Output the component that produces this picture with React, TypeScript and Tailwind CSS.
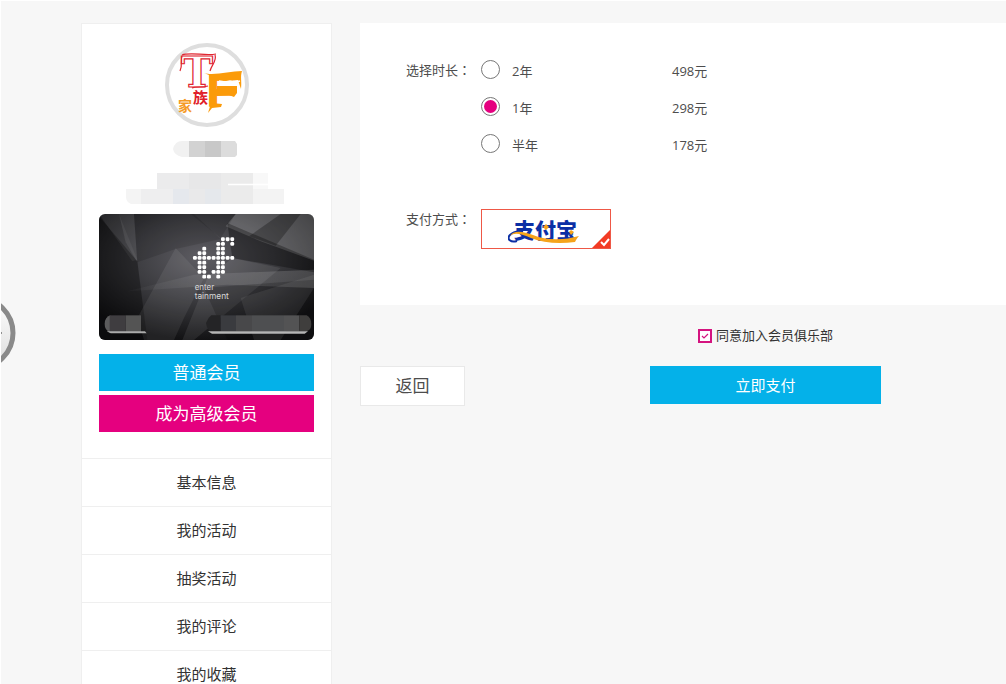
import React, { useState } from 'react';

const durations = [
  { id: 'y2', label: '2年', price: '498元' },
  { id: 'y1', label: '1年', price: '298元' },
  { id: 'half', label: '半年', price: '178元' },
];

const menu = ['基本信息', '我的活动', '抽奖活动', '我的评论', '我的收藏'];

// rows of the dotted "tf" mark, each entry is a list of filled columns
const dots = [
  [6, 7, 8],
  [5, 6, 8],
  [2, 5, 6],
  [1, 2, 5, 6],
  [0, 1, 2, 3, 4, 5, 6, 7, 8],
  [1, 2, 5, 6],
  [1, 2, 5, 6],
  [1, 2, 4, 5, 6],
  [2, 3, 5],
];

const Avatar: React.FC = () => (
  <svg viewBox="0 0 84 84" className="w-[84px] h-[84px]" role="img" aria-label="TF家族">
    <circle cx="42" cy="42" r="40" fill="#fff" stroke="#dedede" strokeWidth="4" />
    <text x="16" y="44" fontSize="43" fontWeight="700" fill="#fff" stroke="#e0252f" strokeWidth="1.2" fontFamily="DejaVu Serif, serif">T</text>
    <path d="M17 13c-2 4 1 9-2 15M17 12c8-3 24 1 34-1M50 12c2 6-3 9-5 16M27 45c4-2 10 0 16-2" fill="none" stroke="#e0252f" strokeWidth="1.2" />
    <text x="42" y="63" fontSize="44" fontWeight="700" fill="#fb9b0a" stroke="#fb9b0a" strokeWidth="1.5" fontFamily="Liberation Sans, sans-serif">F</text>
    <path d="M39 30c10 3 26-2 38-2-2 6 0 10-1 18l-3-9-10 1-18-1-1-5zM46 60l-3 10 4-5 9-1 1-3zM52 43h20v7l-3 4-5-2-12 1z" fill="#fb9b0a" />
    <path d="M54 38l6 1 5-1 6 1 4-1" fill="none" stroke="#fff" strokeWidth="1.5" />
    <text x="28" y="60" fontSize="15" fontWeight="700" fill="#e0202a" fontFamily="Noto Sans CJK SC, sans-serif">族</text>
    <text x="13" y="68" fontSize="14" fontWeight="700" fill="#f59a23" fontFamily="Noto Sans CJK SC, sans-serif">家</text>
  </svg>
);

const MemberCard: React.FC = () => (
  <svg viewBox="15 18 645 378" className="block w-full h-[126px] rounded-md" preserveAspectRatio="none" role="img" aria-label="tf entertainment">
    <defs>
      <radialGradient id="card" cx="0.48" cy="0.35" r="0.65">
        <stop offset="0" stopColor="#5e5d63" />
        <stop offset="0.5" stopColor="#3c3c40" />
        <stop offset="1" stopColor="#121214" />
      </radialGradient>
      <linearGradient id="ray" x1="0" y1="0" x2="1" y2="0">
        <stop offset="0" stopColor="#fff" stopOpacity="0.02" />
        <stop offset="1" stopColor="#fff" stopOpacity="0.17" />
      </linearGradient>
    </defs>
    <rect x="15" y="18" width="645" height="378" fill="url(#card)" />
    <path d="M15 25L130 160 160 396H15z" fill="#000" opacity="0.35" />
    <path d="M75 18h45l10 145-35-60z" fill="#fff" opacity="0.08" />
    <path d="M15 18h60L130 155l-15 5z" fill="#fff" opacity="0.05" />
    <path d="M245 120L330 210 270 330 240 396H150L130 330z" fill="#fff" opacity="0.07" />
    <path d="M100 250L300 200 660 185V240L400 230z" fill="url(#ray)" />
    <path d="M120 18h180l80 75-135 30-115 40z" fill="#000" opacity="0.12" />
    <path d="M425 18h235v140L500 100 395 55z" fill="#fff" opacity="0.2" />
    <path d="M560 18h60l-75 95-80-28z" fill="#000" opacity="0.28" />
    <path d="M400 45l260 110v38L415 150z" fill="#000" opacity="0.3" />
    <path d="M290 18h135L380 90z" fill="#000" opacity="0.12" />
    <path d="M415 150L560 180 300 396H265L340 210z" fill="#fff" opacity="0.08" />
    <path d="M330 240L660 215V396H400z" fill="#000" opacity="0.18" />
    <path d="M440 270L660 200V240L560 396H480z" fill="#fff" opacity="0.07" />
    {dots.map((cols, r) =>
      cols.map((c) => <rect key={`${r}-${c}`} x={297 + c * 14} y={88 + r * 14} width="11.500" height="11.500" rx="4" fill="#fff" />)
    )}
    <text x="302" y="247" fontSize="24" fill="#d8d8d8" fontFamily="Inter, sans-serif">enter</text>
    <text x="302" y="272" fontSize="25" fill="#d8d8d8" fontFamily="Inter, sans-serif">tainment</text>
    {/* masked member name and number */}
    <path d="M49 322v52q-17-6-17-26t17-26z" fill="#5b5b5c" />
    <rect x="47" y="322" width="48" height="52" fill="#3f3d40" />
    <rect x="95" y="322" width="46" height="52" fill="#545454" />
    <path d="M38 370l12 6h108l-5-6z" fill="#aaa" />
    <path d="M380 322v46h-34q-10-12-10-23 6-16 16-23z" fill="#242426" />
    <rect x="380" y="322" width="46" height="48" fill="#3a3b3f" />
    <rect x="426" y="322" width="48" height="48" fill="#48484a" />
    <rect x="474" y="322" width="96" height="48" fill="#4e4f51" />
    <rect x="570" y="322" width="46" height="48" fill="#535354" />
    <path d="M616 322h22q14 8 14 26t-14 22h-22z" fill="#3f3e3d" />
    <path d="M342 370h300l-10 7H354z" fill="#b5b5b5" />
  </svg>
);

const MaskedName: React.FC = () => (
  <svg viewBox="0 0 162 63" className="w-[162px] h-[63px] mt-[14px]" aria-hidden="true">
    <path d="M63 0v16h-7Q48 14 47 8q2-8 9-8z" fill="#f1f1f1" />
    <rect x="63" width="16" height="16" fill="#d2d2d2" />
    <rect x="79" width="16" height="16" fill="#c8c8c8" />
    <path d="M95 0h14l2 3v11l-2 2H95z" fill="#dcdcdc" />
    <rect x="31" y="32" width="32" height="16" fill="#ebebec" />
    <rect x="63" y="32" width="32" height="16" fill="#e7e7e8" />
    <rect x="95" y="32" width="32" height="16" fill="#ebebeb" />
    <rect x="127" y="32" width="15" height="16" fill="#f8f8f8" />
    <path d="M102 43.500h40" stroke="#fff" strokeWidth="1.5" />
    <path d="M0 48h15v15H5q-5-2-5-7z" fill="#f4f4f4" />
    <rect x="15" y="48" width="32" height="15" fill="#eeeeef" />
    <rect x="47" y="48" width="16" height="15" fill="#e5e8ed" />
    <rect x="63" y="48" width="16" height="15" fill="#e9e9ea" />
    <rect x="79" y="48" width="16" height="15" fill="#e5e8ec" />
    <rect x="95" y="48" width="32" height="15" fill="#ebebeb" />
    <rect x="127" y="48" width="31" height="15" fill="#f3f3f3" />
  </svg>
);

const AlipayLogo: React.FC = () => (
  <svg viewBox="0 0 76 38" className="w-[76px] h-[38px]" role="img" aria-label="支付宝">
    <text x="6" y="28" fontSize="21" fontWeight="900" fill="#0b2fa5" fontFamily="Noto Sans CJK SC, sans-serif">支付宝</text>
    <path d="M9 31C3 33-2 29 2 25c4-4 9-4 13-3" fill="none" stroke="#0b2fa5" strokeWidth="2" />
    <path d="M2 26c3-6 13-5 23-1 14 6 32 5 46 1-2 2-3 4-4 6-16 2-32 1-44-4C14 24 6 22 2 26z" fill="#f5a31a" />
    <path d="M35 17l3-3 3 3-3 3zM61 22l2-2 3 2-3 3z" fill="#f5a31a" />
  </svg>
);

// full-width colon centred in its cell
const Colon: React.FC = () => <span className="font-['Noto_Sans_CJK_TC',sans-serif]">：</span>;

const App: React.FC = () => {
  const [duration, setDuration] = useState('y1');

  return (
    <div className="h-screen overflow-hidden relative bg-[#f7f7f7] border-t border-l border-white pt-[22px] pl-20 flex items-start gap-7 text-[13px] text-[#4d4d4d] font-['Open_Sans','Noto_Sans_CJK_SC',sans-serif]">
      <aside className="w-[251px] shrink-0 bg-white border border-[#efefef]">
        <section className="h-[434px] px-[17px] pt-[19px] flex flex-col items-center">
          <Avatar />
          <MaskedName />
          <div className="w-full mt-[10px]">
            <MemberCard />
          </div>
          <button type="button" className="mt-[14px] w-full h-[37px] shrink-0 bg-[#04b1e9] text-white text-[17px]">普通会员</button>
          <button type="button" className="mt-1 w-full h-[37px] shrink-0 bg-[#e5007f] text-white text-[17px]">成为高级会员</button>
        </section>
        <nav>
          {menu.map((item) => (
            <a key={item} href="#" className="h-12 border-t border-[#efefef] flex items-center justify-center text-[15px] text-[#333]">
              {item}
            </a>
          ))}
        </nav>
      </aside>

      <main className="grow">
        <div className="bg-white h-[282px] pl-[46px] pt-7">
          <fieldset className="flex">
            <legend className="float-left w-[75px] leading-[38px]">选择时长<Colon /></legend>
            <div>
              {durations.map(({ id, label, price }) => (
                <label key={id} className="flex items-center h-[37px]">
                  <input
                    type="radio"
                    name="duration"
                    checked={duration === id}
                    onChange={() => setDuration(id)}
                    className="appearance-none w-[19px] h-[19px] rounded-full border border-[#777] bg-white p-[2px] bg-clip-content checked:bg-[#e5007f]"
                  />
                  <span className="ml-3 w-40 leading-5 pt-[2px]">{label}</span>
                  <span className="leading-5 pt-[2px]">{price}</span>
                </label>
              ))}
            </div>
          </fieldset>
          <div className="flex mt-[47px]">
            <span className="w-[75px] leading-5">支付方式<Colon /></span>
            <button type="button" aria-label="支付宝" className="relative w-[130px] h-10 border border-[#ee5846] flex items-center justify-center">
              <AlipayLogo />
              <svg viewBox="0 0 18 18" className="absolute right-0 bottom-0 w-[18px] h-[18px]" aria-hidden="true">
                <path d="M18 0v18H0z" fill="#f23b24" />
                <path d="M9 12l3 3 5-6" fill="none" stroke="#fff" strokeWidth="2" />
              </svg>
            </button>
          </div>
        </div>

        <div className="flex items-end mt-[19px]">
          <button type="button" className="w-[105px] h-10 bg-white border border-[#e9e9e9] text-[17px]">返回</button>
          <div className="ml-[185px] w-[231px] flex flex-col items-center">
            <label className="flex items-center gap-1 h-6 text-[#333]">
              <span className="relative flex">
                <input type="checkbox" defaultChecked className="peer appearance-none w-[14px] h-[14px] border-2 border-[#d4147f] bg-white" />
                <svg viewBox="0 0 14 14" className="absolute inset-0 w-[14px] h-[14px] opacity-0 peer-checked:opacity-100 pointer-events-none" aria-hidden="true">
                  <path d="M4 7l2 2 4-4" fill="none" stroke="#d4147f" strokeWidth="1.200" />
                </svg>
              </span>
              同意加入会员俱乐部
            </label>
            <button type="button" className="mt-[18px] mb-[2px] w-full h-[38px] bg-[#04b1e9] text-white text-[15px]">立即支付</button>
          </div>
        </div>
      </main>

      {/* carousel handle, mostly off the left edge */}
      <button type="button" aria-label="上一页" className="absolute -left-[61px] top-[294px] w-[76px] h-[76px]">
        <svg viewBox="0 0 76 76" aria-hidden="true">
          <defs>
            <linearGradient id="knob" x1="0" y1="0" x2="0" y2="1">
              <stop offset="0" stopColor="#fff" />
              <stop offset="1" stopColor="#dcdcdc" />
            </linearGradient>
          </defs>
          <circle cx="38" cy="38" r="35" fill="url(#knob)" stroke="#8a8a8a" strokeWidth="5" />
          <path d="M52 30l8 8-8 8" fill="none" stroke="#444" strokeWidth="3" />
        </svg>
      </button>
    </div>
  );
};

export default App;
